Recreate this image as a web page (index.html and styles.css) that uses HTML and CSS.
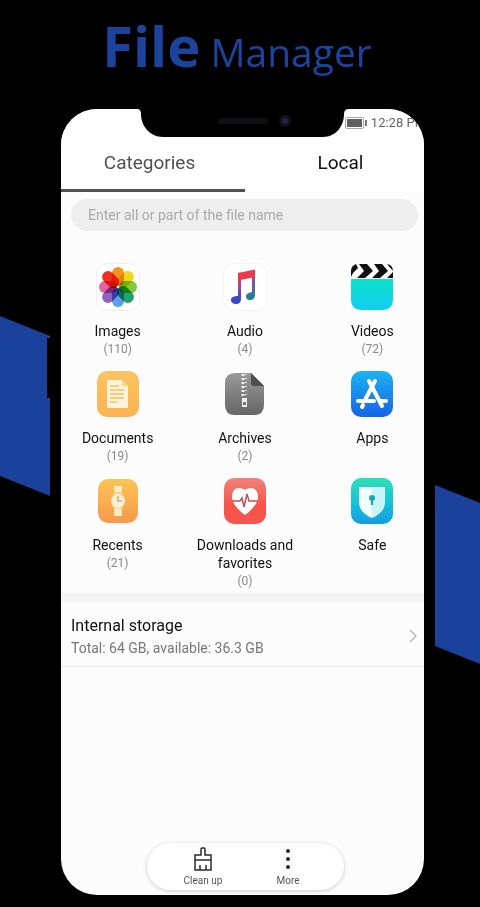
FILE: index.html
```
<!DOCTYPE html>
<html lang="en">
<head>
    <meta charset="UTF-8">
    <meta name="viewport" content="width=device-width, initial-scale=1.0">
    <title>File Manager</title>
    <link rel="stylesheet" href="styles.css">
</head>
<body>
    <h1 class="title"><strong>File</strong> Manager</h1>

    <div class="stage">
        <svg class="band band-left" width="50" height="180" viewBox="0 0 50 180" aria-hidden="true">
            <path d="M0 0L50 20V22H47V82H50V180L0 160Z" fill="#1a429c"/>
        </svg>

        <main class="phone">
            <!-- notch with speaker and camera -->
            <svg class="notch" width="212" height="29" viewBox="0 0 212 29" aria-hidden="true">
                <path d="M0 0Q4 0 4 5C4 17 13 28 26 28H186C199 28 207 17 207 5Q207 0 212 0Z" fill="#000"/>
                <rect x="81" y="9" width="50" height="6" rx="3" fill="#101012"/>
                <circle cx="148" cy="12" r="6" fill="#111122"/>
                <circle cx="148" cy="12" r="3" fill="#25253f"/>
            </svg>

            <div class="screen">
                <header>
                    <div class="status">
                        <svg width="22" height="12" viewBox="0 0 22 12" aria-hidden="true">
                            <rect x=".5" y=".5" width="18" height="11" rx="1" fill="#fff" stroke="#aaa"/>
                            <rect x="2" y="2" width="15" height="8" fill="#606060"/>
                            <rect x="20" y="3" width="2" height="6" fill="#777"/>
                        </svg>
                        <span>12:28 PM</span>
                    </div>
                    <nav class="tabs">
                        <button class="tab active">Categories</button>
                        <button class="tab">Local</button>
                    </nav>
                </header>

                <input class="search" type="search" aria-label="Search files" placeholder="Enter all or part of the file name">

                <section class="categories">
                    <a class="category" href="#images">
                        <svg class="icon" viewBox="0 0 44 48" aria-hidden="true">
                            <rect x=".5" y=".5" width="43" height="47" rx="11" fill="#fff" stroke="#efefef"/>
                            <g class="petals" transform="translate(22 24)">
                                <rect x="-6" y="-20" width="12" height="19" rx="6" fill="#f7941d"/>
                                <rect x="-6" y="-20" width="12" height="19" rx="6" fill="#ecdb1c" transform="rotate(45)"/>
                                <rect x="-6" y="-19" width="12" height="18" rx="6" fill="#85c83a" transform="rotate(90)"/>
                                <rect x="-6" y="-20" width="12" height="19" rx="6" fill="#22a36c" transform="rotate(135)"/>
                                <rect x="-6" y="-20" width="12" height="19" rx="6" fill="#5b9fe6" transform="rotate(180)"/>
                                <rect x="-6" y="-20" width="12" height="19" rx="6" fill="#8f62c0" transform="rotate(225)"/>
                                <rect x="-6" y="-19" width="12" height="18" rx="6" fill="#e6619f" transform="rotate(270)"/>
                                <rect x="-6" y="-20" width="12" height="19" rx="6" fill="#ee3020" transform="rotate(315)"/>
                            </g>
                            <circle cx="22" cy="24" r="1" fill="#fff"/>
                        </svg>
                        <span class="name">Images</span>
                        <span class="count">(110)</span>
                    </a>
                    <a class="category" href="#audio">
                        <svg class="icon" viewBox="0 0 44 48" aria-hidden="true">
                            <defs>
                                <linearGradient id="noteFill" x1="0" y1="0" x2="0" y2="1">
                                    <stop offset=".2" stop-color="#ea3a4e"/>
                                    <stop offset=".5" stop-color="#8a4ba6"/>
                                    <stop offset=".8" stop-color="#3a49cc"/>
                                </linearGradient>
                                <linearGradient id="stemFill" x1="0" y1="0" x2="0" y2="1">
                                    <stop offset="0" stop-color="#ea3a4e"/>
                                    <stop offset=".5" stop-color="#6d5aa8"/>
                                    <stop offset="1" stop-color="#16878f"/>
                                </linearGradient>
                            </defs>
                            <rect x=".5" y=".5" width="43" height="47" rx="11" fill="#fff" stroke="#f3f3f3"/>
                            <path d="M15 10L18 9.500V36C18 39 16 41 13 41C10 41 8 39.500 8 37C8 34 11 33 15 33Z" fill="url(#noteFill)"/>
                            <path d="M29 8L32 7V32C32 35 30 37 27 37C24 37 23 35.500 23 33.500C23 31 26 29.500 29 29Z" fill="url(#stemFill)"/>
                            <path d="M15 10L32 6.500V14L15 17.500Z" fill="#ea3a4e"/>
                        </svg>
                        <span class="name">Audio</span>
                        <span class="count">(4)</span>
                    </a>
                    <a class="category" href="#videos">
                        <svg class="icon" viewBox="0 0 44 48" aria-hidden="true">
                            <defs>
                                <linearGradient id="videoFill" x1="0" y1="0" x2="0" y2="1">
                                    <stop offset="0" stop-color="#0ce2c8"/>
                                    <stop offset="1" stop-color="#12cdf4"/>
                                </linearGradient>
                            </defs>
                            <path d="M1 16H43V36Q43 47 32 47H12Q1 47 1 36Z" fill="url(#videoFill)"/>
                            <path d="M1 16V8L6 1H38L43 8V16Z" fill="#fff"/>
                            <path d="M1 8Q1 3 6 1L8 5L3 10L1 14ZM9 1H17L23 8L15 15H7L14 8ZM24 1H32L38 8L30 15H22L29 8ZM37 1Q43 2 43 8ZM43 9V15H37Z" fill="#101010"/>
                        </svg>
                        <span class="name">Videos</span>
                        <span class="count">(72)</span>
                    </a>
                    <a class="category" href="#documents">
                        <svg class="icon" viewBox="0 0 44 48" aria-hidden="true">
                            <defs>
                                <linearGradient id="docFill" x1="0" y1="0" x2="0" y2="1">
                                    <stop offset="0" stop-color="#fac462"/>
                                    <stop offset="1" stop-color="#fbb34e"/>
                                </linearGradient>
                            </defs>
                            <rect x="1" y="1" width="42" height="46" rx="10" fill="url(#docFill)"/>
                            <path d="M11 10H26L32 16V38H11Z" fill="#fdf3db"/>
                            <path d="M26 10V16H32Z" fill="#f6d58e"/>
                            <path d="M14 16H23M14 20H28M14 24H28M14 28H28M14 32H21" stroke="#f3be66" stroke-width="1.500"/>
                        </svg>
                        <span class="name">Documents</span>
                        <span class="count">(19)</span>
                    </a>
                    <a class="category" href="#archives">
                        <svg class="icon" viewBox="0 0 44 48" aria-hidden="true">
                            <defs>
                                <linearGradient id="zipFill" x1="0" y1="0" x2="0" y2="1">
                                    <stop offset="0" stop-color="#999"/>
                                    <stop offset="1" stop-color="#666"/>
                                </linearGradient>
                            </defs>
                            <path d="M12 3H28L41 16V35Q41 45 31 45H12Q2 45 2 35V13Q2 3 12 3Z" fill="url(#zipFill)"/>
                            <path d="M28 3L41 16H31Q28 16 28 13Z" fill="#4e4e4e"/>
                            <path d="M20 4V28" stroke="#eee" stroke-width="3" stroke-dasharray="2 2"/>
                            <path d="M23 4V28" stroke="#ddd" stroke-width="2" stroke-dasharray="1 3"/>
                            <path d="M19 28H24V37H19Z" fill="#eee"/>
                            <rect x="20" y="32" width="3" height="3" fill="#777"/>
                        </svg>
                        <span class="name">Archives</span>
                        <span class="count">(2)</span>
                    </a>
                    <a class="category" href="#apps">
                        <svg class="icon" viewBox="0 0 44 48" aria-hidden="true">
                            <defs>
                                <linearGradient id="appFill" x1="0" y1="0" x2="0" y2="1">
                                    <stop offset="0" stop-color="#1cb4f3"/>
                                    <stop offset="1" stop-color="#1763e8"/>
                                </linearGradient>
                            </defs>
                            <rect x="1" y="1" width="42" height="46" rx="10" fill="url(#appFill)"/>
                            <g stroke="#fff" stroke-width="4" stroke-linecap="round" fill="none">
                                <path d="M25 11L15 30M19 11L32 36M8 31H24M31 31H36M13 35L12 37"/>
                            </g>
                        </svg>
                        <span class="name">Apps</span>
                    </a>
                    <a class="category" href="#recents">
                        <svg class="icon" viewBox="0 0 44 48" aria-hidden="true">
                            <defs>
                                <linearGradient id="recentFill" x1="0" y1="0" x2="0" y2="1">
                                    <stop offset="0" stop-color="#fcc455"/>
                                    <stop offset="1" stop-color="#f8994b"/>
                                </linearGradient>
                            </defs>
                            <rect x="2" y="2" width="40" height="44" rx="10" fill="url(#recentFill)"/>
                            <path d="M18 9H26V15H18ZM18 32H26V39H18Z" fill="#fdebc8"/>
                            <path d="M18 15H26L27 18H17ZM17 29H27L26 32H18Z" fill="#fbd491"/>
                            <circle cx="22" cy="24" r="7" fill="#fdf0d4"/>
                            <path d="M22 19V24H26" fill="none" stroke="#e3a765" stroke-width="1.500"/>
                        </svg>
                        <span class="name">Recents</span>
                        <span class="count">(21)</span>
                    </a>
                    <a class="category" href="#favorites">
                        <svg class="icon" viewBox="0 0 44 48" aria-hidden="true">
                            <defs>
                                <linearGradient id="favFill" x1="0" y1="0" x2="0" y2="1">
                                    <stop offset="0" stop-color="#ef8379"/>
                                    <stop offset=".6" stop-color="#f85348"/>
                                    <stop offset="1" stop-color="#f5564c"/>
                                </linearGradient>
                            </defs>
                            <rect x="1" y="1" width="42" height="46" rx="10" fill="url(#favFill)"/>
                            <path d="M22 38C15 33 9 26 9 20C9 14 12 11 16 11C19 11 21 12 22 13C23 12 25 11 28 11C32 11 35 14 35 20C35 26 29 33 22 38Z" fill="#fff"/>
                            <path d="M9 24H17L19 21L21 30L24 17L26 24H35" fill="none" stroke="#bd5358" stroke-width="1.500"/>
                        </svg>
                        <span class="name">Downloads and favorites</span>
                        <span class="count">(0)</span>
                    </a>
                    <a class="category" href="#safe">
                        <svg class="icon" viewBox="0 0 44 48" aria-hidden="true">
                            <defs>
                                <linearGradient id="safeFill" x1="0" y1="0" x2="0" y2="1">
                                    <stop offset="0" stop-color="#2ddfb6"/>
                                    <stop offset=".5" stop-color="#19c4d5"/>
                                    <stop offset="1" stop-color="#149be5"/>
                                </linearGradient>
                            </defs>
                            <rect x="1" y="1" width="42" height="46" rx="10" fill="url(#safeFill)"/>
                            <path d="M22 10H35V25C35 33 29 38 22 41Z" fill="#c9f3f7"/>
                            <path d="M22 10H9V25C9 33 15 38 22 41Z" fill="#f2ffff"/>
                            <circle cx="22" cy="21" r="3" fill="#16a6b8"/>
                            <path d="M22 21V28" stroke="#16a6b8" stroke-width="2"/>
                        </svg>
                        <span class="name">Safe</span>
                    </a>
                </section>

                <a class="storage" href="#storage">
                    <span class="storage-text">
                        <span class="storage-name">Internal storage</span>
                        <span class="storage-info">Total: 64 GB, available: 36.3 GB</span>
                    </span>
                    <svg width="8" height="16" viewBox="0 0 8 16" aria-hidden="true">
                        <path d="M1 2L7 8L1 14" fill="none" stroke="#bbb" stroke-width="1.500"/>
                    </svg>
                </a>
            </div>

            <footer class="toolbar">
                <button class="tool">
                    <svg width="18" height="24" viewBox="0 0 18 24" aria-hidden="true">
                        <path d="M1 23V8H7V2Q7 1 8 1H10Q11 1 11 2V8H17V23ZM1 13H17M6 23V18M12 23V18" fill="none" stroke="#2a2a2a" stroke-width="1.500"/>
                    </svg>
                    Clean up
                </button>
                <button class="tool">
                    <svg width="18" height="24" viewBox="0 0 18 24" aria-hidden="true">
                        <circle cx="9" cy="4" r="2" fill="#2a2a2a"/>
                        <circle cx="9" cy="12" r="2" fill="#2a2a2a"/>
                        <circle cx="9" cy="20" r="2" fill="#2a2a2a"/>
                    </svg>
                    More
                </button>
            </footer>
        </main>

        <svg class="band band-right" width="45" height="180" viewBox="0 0 45 180" aria-hidden="true">
            <path d="M0 0L45 18V179L0 161Z" fill="#1a429c"/>
        </svg>
    </div>
</body>
</html>
```
FILE: styles.css
```
* {
    box-sizing: border-box;
}
body {
    margin: 0;
    min-height: 100vh;
    display: flex;
    flex-direction: column;
    background: #000;
    font-family: Roboto, sans-serif;
}
a {
    color: inherit;
    text-decoration: none;
}
button {
    border: none;
    background: none;
    padding: 0;
    font-family: inherit;
    cursor: pointer;
}
.title {
    margin: 0;
    padding: 7px 6px 0 0;
    height: 109px;
    color: #1c449d;
    font-family: "Open Sans", sans-serif;
    font-size: 39px;
    font-weight: 400;
    line-height: 76px;
    text-align: center;
}
.title strong {
    font-size: 56px;
    font-weight: 700;
}
.stage {
    flex: 1;
    display: grid;
    grid-template-columns: 61px 1fr 56px;
    padding-bottom: 12px;
}
.band-left {
    margin-top: 207px;
}
.band-right {
    margin-top: 376px;
    justify-self: end;
}
.phone {
    position: relative;
    display: flex;
    flex-direction: column;
    overflow: hidden;
    border-radius: 36px;
    background: #fcfcfc;
}
.notch {
    position: absolute;
    top: 0;
    left: 50%;
    transform: translateX(-50%);
}
/* the screen runs past the rounded frame on both sides */
.screen {
    flex: 1;
    margin: 0 -12px 0 -7px;
}
header {
    background: #fff;
}
.status {
    display: flex;
    justify-content: flex-end;
    align-items: center;
    gap: 4px;
    height: 27px;
    padding-right: 10px;
    color: #666;
    font-size: 13px;
}
.tabs {
    display: flex;
}
.tab {
    flex: 1;
    height: 56px;
    border-bottom: 3px solid transparent;
    color: #111;
    font-size: 19px;
}
.tab.active {
    border-color: #505055;
    color: #505055;
}
.search {
    display: block;
    width: calc(100% - 35px);
    height: 32px;
    margin: 7px 18px 0 17px;
    padding: 0 17px;
    border: none;
    border-radius: 16px;
    background: #eee;
    font-family: inherit;
    font-size: 14px;
}
.search::placeholder {
    color: #aaa;
}
.categories {
    display: grid;
    grid-template-columns: repeat(3, 1fr);
    row-gap: 12px;
    padding: 32px 0 3px;
}
.category {
    display: flex;
    flex-direction: column;
    align-items: center;
    text-align: center;
}
.icon {
    width: 44px;
    height: 48px;
    margin-bottom: 11px;
}
.name {
    max-width: 112px;
    color: #111;
    font-size: 14px;
    line-height: 18px;
}
.count {
    color: #888;
    font-size: 12px;
    line-height: 18px;
}
.storage {
    display: flex;
    align-items: center;
    margin-right: 12px;
    padding: 12px 7px 8px 17px;
    border-top: 9px solid #f4f4f4;
    border-bottom: 1px solid #e8e8e8;
}
.storage-text {
    flex: 1;
    display: flex;
    flex-direction: column;
}
.storage-name {
    color: #111;
    font-size: 16px;
    line-height: 24px;
}
.storage-info {
    color: #777;
    font-size: 14px;
    line-height: 20px;
}
.toolbar {
    display: flex;
    align-self: center;
    width: 54%;
    height: 47px;
    margin: 0 0 5px 6px;
    padding: 0 13px;
    border-radius: 24px;
    background: #fff;
    box-shadow: 0 1px 4px rgba(0, 0, 0, 0.2);
}
.tool {
    flex: 1;
    display: flex;
    flex-direction: column;
    align-items: center;
    gap: 3px;
    padding-top: 4px;
    color: #555;
    font-size: 10px;
    line-height: 14px;
}
.petals rect {
    mix-blend-mode: multiply;
}
```
